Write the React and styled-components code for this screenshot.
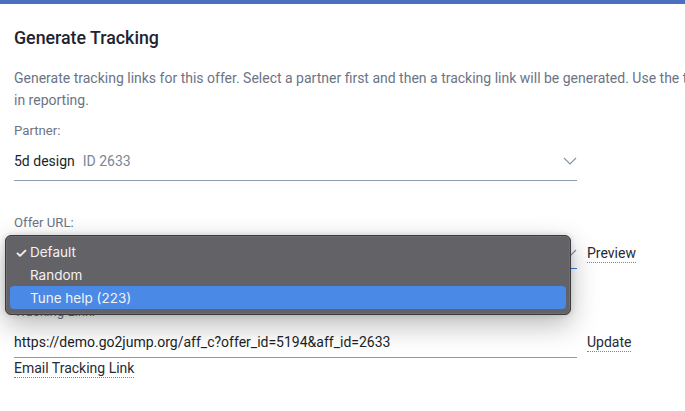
import React from "react";
import styled, { createGlobalStyle } from "styled-components";

const Global = createGlobalStyle`
  html, body { margin: 0; padding: 0; background: #fff; overflow: hidden; }
  body { font-family: Roboto, "Noto Sans", Arial, sans-serif; -webkit-font-smoothing: antialiased; }
`;

const Page = styled.div`
  width: 685px;
  height: 411px;
  overflow: hidden;
  position: relative;
`;

const TopBar = styled.div`
  height: 4px;
  background: #4a70be;
`;

const Content = styled.div`
  padding: 24px 0 0 14px;
  display: flex;
  flex-direction: column;
`;

const Title = styled.h2`
  margin: 0;
  font-size: 17.8px;
  line-height: 20px;
  font-weight: 500;
  color: #1e2430;
`;

const Description = styled.p`
  margin: 19px 0 0;
  font-size: 14px;
  line-height: 22px;
  color: #6b7485;
  white-space: nowrap;
`;

const Label = styled.div`
  font-size: 13.2px;
  line-height: 16px;
  color: #6b7485;
  margin-top: ${(p) => p.$top}px;
`;

const FieldRow = styled.div`
  display: flex;
  align-items: flex-end;
  gap: 10px;
  margin-top: 8px;
`;

const Field = styled.div`
  width: 563px;
  box-sizing: border-box;
  display: flex;
  align-items: center;
  padding: 4px 0 ${(p) => p.$pb}px;
  border-bottom: 1px solid ${(p) => (p.$focused ? "#2f7de1" : "#8e9cb0")};
  font-size: 14px;
  line-height: 20px;
  color: #1b1f27;
`;

const Value = styled.span`
  flex: 1;
`;

const Muted = styled.span`
  color: #7a8597;
  margin-left: 8px;
`;

const Chevron = styled.svg`
  width: 14px;
  height: 8px;
  flex: none;
`;

const LinkButton = styled.span`
  font-size: 14px;
  line-height: 17px;
  color: #262b35;
  border-bottom: 1px dotted #7d8899;
  margin-bottom: ${(p) => p.$mb}px;
`;

const EmailLink = styled(LinkButton)`
  align-self: flex-start;
  margin-top: 2px;
`;

const Menu = styled.div`
  position: absolute;
  left: 5px;
  top: 235px;
  width: 566px;
  height: 80px;
  box-sizing: border-box;
  padding: 5px 4px;
  background: #636267;
  border: 1px solid #3b3a3e;
  border-radius: 6px;
  box-shadow: inset 0 0 0 1px rgba(255, 255, 255, 0.07), 0 10px 28px rgba(0, 0, 0, 0.28), 0 0 6px rgba(0, 0, 0, 0.15);
  font-family: Inter, "Liberation Sans", Arial, sans-serif;
  font-size: 13.5px;
  display: flex;
  flex-direction: column;
`;

const MenuItem = styled.div`
  height: 23px;
  display: flex;
  align-items: center;
  padding-left: 5px;
  border-radius: 4px;
  color: #f2f2f3;
  background: ${(p) => (p.$active ? "#4b89e6" : "transparent")};
`;

const Check = styled.span`
  width: 15px;
  flex: none;
  font-size: 14px;
  font-weight: 600;
`;

const ChevronIcon = () => (
  <Chevron viewBox="0 0 14 8">
    <path d="M1 1 L7 7 L13 1" fill="none" stroke="#8391a6" strokeWidth="1.1" />
  </Chevron>
);

export default function App() {
  return (
    <Page>
      <Global />
      <TopBar />
      <Content>
        <Title>Generate Tracking</Title>
        <Description>
          Generate tracking links for this offer. Select a partner first and then a tracking link will be generated. Use the tracking link to track conversions
          <br />
          in reporting.
        </Description>

        <Label $top={12}>Partner:</Label>
        <FieldRow>
          <Field $pb={9}>
            <Value>
              5d design<Muted>ID 2633</Muted>
            </Value>
            <ChevronIcon />
          </Field>
        </FieldRow>

        <Label $top={34}>Offer URL:</Label>
        <FieldRow>
          <Field $pb={5} $focused>
            <Value>Default</Value>
            <ChevronIcon />
          </Field>
          <LinkButton $mb={6}>Preview</LinkButton>
        </FieldRow>

        <Label $top={35}>Tracking Link:</Label>
        <FieldRow>
          <Field $pb={5}>
            <Value>https://demo.go2jump.org/aff_c?offer_id=5194&amp;aff_id=2633</Value>
          </Field>
          <LinkButton $mb={6}>Update</LinkButton>
        </FieldRow>
        <EmailLink>Email Tracking Link</EmailLink>
      </Content>

      <Menu>
        <MenuItem>
          <Check>✓</Check>Default
        </MenuItem>
        <MenuItem>
          <Check />Random
        </MenuItem>
        <MenuItem $active>
          <Check />Tune help (223)
        </MenuItem>
      </Menu>
    </Page>
  );
}
